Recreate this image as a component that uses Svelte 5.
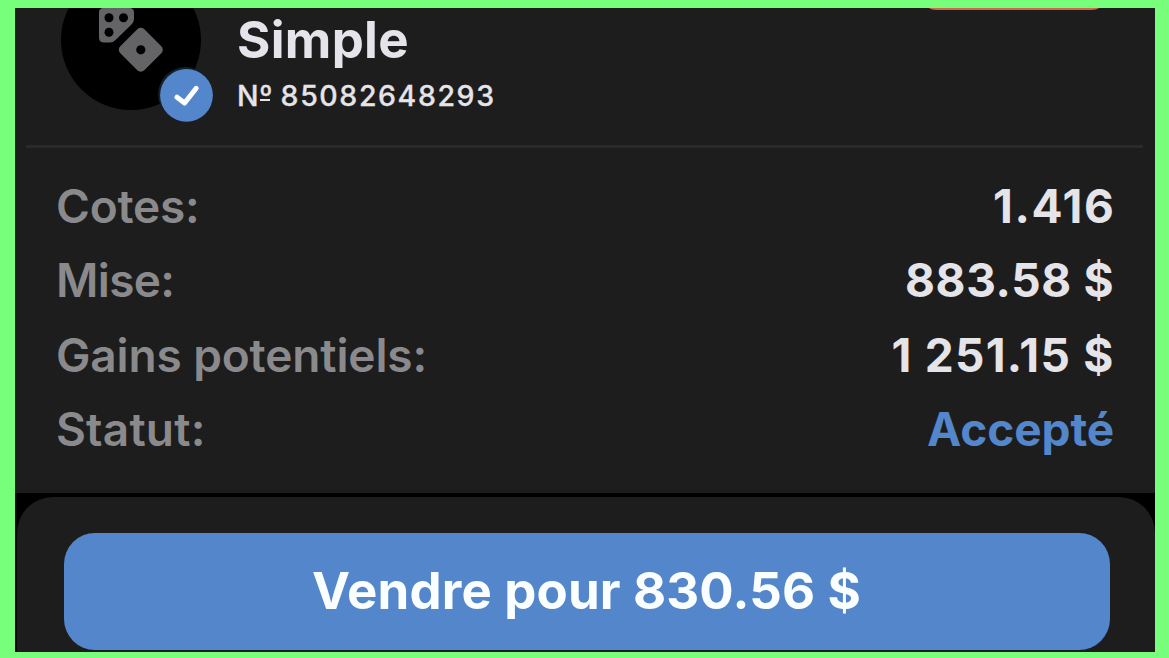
<script>
  const rows = [
    { label: 'Cotes:', value: '1.416', name: 'odds' },
    { label: 'Mise:', value: '883.58 $', name: 'stake' },
    { label: 'Gains potentiels:', value: '1 251.15 $', name: 'gains' },
    { label: 'Statut:', value: 'Accepté', name: 'status' }
  ];
</script>

<div class="frame">
  <main class="screen">
    <section class="card">
      <span class="tag"></span>
      <header>
        <div class="avatar">
          <svg class="dice" viewBox="0 0 140 140" aria-hidden="true">
            <circle cx="70" cy="70" r="70" fill="#000" />
            <path fill="#646467" d="M42.500 38H68.500Q73 38 73 42.500V49Q73 52 70.500 54.500L54.500 70Q52 72.500 49 72.500H43Q38 72.500 38 67.500V42.500Q38 38 42.500 38Z" />
            <rect x="-17" y="-17" width="34" height="34" rx="5" fill="#646467" transform="translate(79.800 79.800) rotate(45)" />
            <g fill="#000">
              <circle cx="48" cy="47.700" r="4.500" />
              <circle cx="62.500" cy="47.700" r="4.500" />
              <circle cx="48" cy="62.300" r="4.500" />
              <circle cx="79.800" cy="79.800" r="4.600" />
            </g>
          </svg>
          <svg class="badge" viewBox="0 0 58 58" aria-hidden="true">
            <circle cx="28.400" cy="28.400" r="27.300" fill="#14202f" />
            <circle cx="29.500" cy="29.300" r="26.400" fill="#5386ca" />
            <path d="M20 31.200L27.600 37L39.200 22.300" fill="none" stroke="#fff" stroke-width="5" stroke-linecap="round" stroke-linejoin="round" />
          </svg>
        </div>
        <div class="heading">
          <h1>Simple</h1>
          <p>N<span class="ordinal">º</span> 85082648293</p>
        </div>
      </header>
      <dl>
        {#each rows as row}
          <div class="row {row.name}">
            <dt>{row.label}</dt>
            <dd>{row.value}</dd>
          </div>
        {/each}
      </dl>
    </section>
    <footer>
      <div class="sheet">
        <button><span>Vendre pour 830.56 $</span></button>
      </div>
    </footer>
  </main>
</div>

<style>
  :global(body) { margin: 0; overflow: hidden; }
  .frame {
    box-sizing: border-box;
    width: 1169px;
    height: 658px;
    padding: 8px 14px 6px 15px;
    background: #77fe7a;
    font-family: Inter, sans-serif;
  }
  .screen { height: 644px; overflow: hidden; background: #000; display: flex; flex-direction: column; }
  .card { position: relative; box-sizing: border-box; flex: 0 0 485px; background: #1d1d1d; overflow: hidden; }
  .tag { position: absolute; right: 49px; top: -48px; width: 184px; height: 50px; border-radius: 14px; background: #c96947; }
  header {
    box-sizing: border-box;
    display: flex;
    height: 140px;
    margin: 0 12px 0 11px;
    padding-left: 35px;
    border-bottom: 3px solid #2a2a2b;
  }
  .avatar { position: relative; width: 140px; height: 140px; margin-top: -38.500px; flex: none; }
  .dice { display: block; width: 140px; height: 140px; }
  .badge { position: absolute; left: 96px; top: 96.500px; width: 58px; height: 58px; }
  .heading { margin-left: 36px; padding-top: 1px; white-space: nowrap; }
  h1 { margin: 0; font-size: 51px; line-height: 62px; font-weight: 700; color: #e5e4ea; letter-spacing: 0.3px; }
  p { margin: 7px 0 0; font-size: 28.500px; line-height: 36px; font-weight: 500; color: #e5e4e8; letter-spacing: 1.600px; word-spacing: -2.500px; -webkit-text-stroke: 0.300px #e5e4e8; }
  .ordinal { position: relative; margin-left: -1px; }
  .ordinal::after { content: ''; position: absolute; left: 1px; bottom: 12px; width: 10px; height: 2px; background: currentColor; }
  dl { margin: 20.500px 41px 0; }
  .row { display: flex; justify-content: space-between; height: 74.500px; line-height: 75px; font-size: 46px; white-space: nowrap; }
  dt { font-weight: 600; color: #8a8a8d; }
  dd { margin: 0; font-weight: 700; color: #e5e4e8; }
  .odds dt { letter-spacing: -0.250px; }
  .odds dd { letter-spacing: 1.700px; margin-right: -1.700px; }
  .stake dt { letter-spacing: -0.650px; }
  .stake dd { letter-spacing: 0.650px; margin-right: -0.250px; }
  .gains dt { letter-spacing: -0.130px; }
  .gains dd { letter-spacing: 1.300px; margin-right: -0.800px; }
  .status dt { letter-spacing: 0.200px; }
  .status dd { color: #5386ca; letter-spacing: -0.100px; }
  footer { flex: 1; padding: 4px 0 0 2px; }
  .sheet { box-sizing: border-box; height: 155px; padding: 36px 45.500px 0 46.500px; border-radius: 36px 36px 0 0; background: #1d1d1d; }
  button {
    display: flex;
    align-items: center;
    justify-content: center;
    width: 100%;
    height: 116.500px;
    border: 0;
    padding: 0;
    border-radius: 31px;
    background: #5386ca;
    color: #fafeff;
    font: 700 51px/62px Inter, sans-serif;
    letter-spacing: 0.150px;
    white-space: nowrap;
  }
</style>
